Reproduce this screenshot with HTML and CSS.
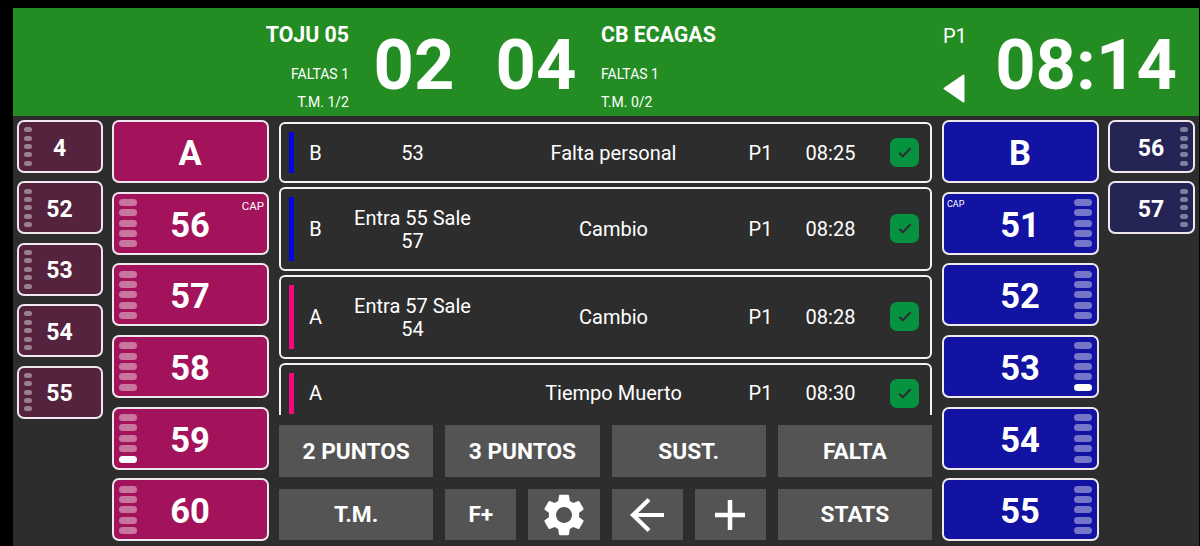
FILE: index.html
```html
<!DOCTYPE html>
<html lang="es">
<head>
  <meta charset="UTF-8">
  <title>Acta Baloncesto</title>
  <link rel="stylesheet" href="styles.css">
</head>
<body>

  <div class="app">
    <div class="header">
      <div class="team team-a">
        <div class="team-name">TOJU 05</div>
        <div class="fouls">FALTAS 1</div>
        <div class="timeouts">T.M. 1/2</div>
      </div>
      <div class="score">02</div>
      <div class="score">04</div>
      <div class="team team-b">
        <div class="team-name">CB ECAGAS</div>
        <div class="fouls">FALTAS 1</div>
        <div class="timeouts">T.M. 0/2</div>
      </div>
      <div class="period">
        <span>P1</span>
        <svg class="arrow" viewBox="0 0 22 29"><path d="M20.5 1.5v26L1.5 14.5z" fill="#fff" stroke="#fff" stroke-width="2" stroke-linejoin="round"/></svg>
      </div>
      <div class="clock">08:14</div>
    </div>

    <div class="main">
      <div class="bench bench-a" id="benchA"></div>
      <div class="court court-a" id="courtA"></div>

      <div class="center">
        <div class="log" id="log"></div>
        <div class="actions">
          <button class="wide">2 PUNTOS</button>
          <button class="wide">3 PUNTOS</button>
          <button class="wide">SUST.</button>
          <button class="wide">FALTA</button>
          <button class="wide">T.M.</button>
          <button>F+</button>
          <button>
            <svg class="gear" viewBox="2 2 20 20"><path fill="#fff" d="M19.14 12.94c.04-.3.06-.61.06-.94 0-.32-.02-.64-.07-.94l2.03-1.58c.18-.14.23-.41.12-.61l-1.92-3.32c-.12-.22-.37-.29-.59-.22l-2.39.96c-.5-.38-1.03-.7-1.62-.94l-.36-2.54c-.04-.24-.24-.41-.48-.41h-3.84c-.24 0-.43.17-.47.41l-.36 2.54c-.59.24-1.13.57-1.62.94l-2.39-.96c-.22-.08-.47 0-.59.22L2.74 8.87c-.12.21-.08.47.12.61l2.03 1.58c-.05.3-.09.63-.09.94s.02.64.07.94l-2.03 1.58c-.18.14-.23.41-.12.61l1.92 3.32c.12.22.37.29.59.22l2.39-.96c.5.38 1.03.7 1.62.94l.36 2.54c.05.24.24.41.48.41h3.84c.24 0 .44-.17.47-.41l.36-2.54c.59-.24 1.13-.56 1.62-.94l2.39.96c.22.08.47 0 .59-.22l1.92-3.32c.12-.22.07-.47-.12-.61l-2.01-1.58zM12 15.8c-2.1 0-3.8-1.7-3.8-3.8s1.7-3.8 3.8-3.8 3.8 1.7 3.8 3.8-1.7 3.8-3.8 3.8z"/></svg>
          </button>
          <button>
            <svg class="back" viewBox="0 0 36 36"><path d="M35 18H4M20 2.500L4 18l16 15.500" fill="none" stroke="#fff" stroke-width="4.200"/></svg>
          </button>
          <button>
            <svg class="plus" viewBox="0 0 30 30"><path d="M15 0v30M0 15h30" stroke="#fff" stroke-width="4.500"/></svg>
          </button>
          <button class="wide">STATS</button>
        </div>
      </div>

      <div class="court court-b" id="courtB"></div>
      <div class="bench bench-b" id="benchB"></div>
    </div>
  </div>

  <script>
    const players = {
      benchA: [{n: 4}, {n: 52}, {n: 53}, {n: 54}, {n: 55}],
      courtA: [{n: 'A', team: true}, {n: 56, cap: true}, {n: 57}, {n: 58}, {n: 59, fouls: 1}, {n: 60}],
      courtB: [{n: 'B', team: true}, {n: 51, cap: true}, {n: 52}, {n: 53, fouls: 1}, {n: 54}, {n: 55}],
      benchB: [{n: 56}, {n: 57}]
    };

    const plays = [
      {team: 'B', who: '53', what: 'Falta personal', time: '08:25'},
      {team: 'B', who: 'Entra 55 Sale 57', what: 'Cambio', time: '08:28'},
      {team: 'A', who: 'Entra 57 Sale 54', what: 'Cambio', time: '08:28'},
      {team: 'A', who: '', what: 'Tiempo Muerto', time: '08:30'}
    ];

    // five foul marks, filled from the bottom
    function foulMarks(fouls) {
      let html = '';
      for (let i = 5; i >= 1; i--) {
        html += `<i class="${i <= fouls ? 'on' : ''}"></i>`;
      }
      return `<span class="marks">${html}</span>`;
    }

    for (const id in players) {
      document.getElementById(id).innerHTML = players[id].map(p => `
        <button class="player">
          ${p.team ? '' : foulMarks(p.fouls || 0)}
          <span class="number">${p.n}</span>
          ${p.cap ? '<span class="cap">CAP</span>' : ''}
        </button>`).join('');
    }

    document.getElementById('log').innerHTML = plays.map(p => `
      <div class="play play-${p.team.toLowerCase()}">
        <span class="bar"></span>
        <span class="cell">${p.team}</span>
        <span class="who">${p.who}</span>
        <span class="cell">${p.what}</span>
        <span class="cell">P1</span>
        <span class="cell">${p.time}</span>
        <span class="check"><svg viewBox="0 0 14 11"><path d="M1.200 5.800L4.800 9.300L12.500 1.300" fill="none" stroke="#2d2d2d" stroke-width="2"/></svg></span>
      </div>`).join('');
  </script>
</body>
</html>
```

FILE: styles.css
```css
* {
  box-sizing: border-box;
}
body {
  margin: 0;
  padding: 8px 1px 0 13px;
  height: 546px;
  overflow: hidden;
  background: #000;
  color: #fff;
  font-family: Roboto, sans-serif;
}
button {
  font-family: inherit;
  color: #fff;
  padding: 0;
  margin: 0;
  border: none;
  cursor: pointer;
}
.app {
  height: 538px;
  background: #2d2d2d;
}

/* header */
.header {
  height: 108px;
  background: #238d23;
  display: grid;
  grid-template-columns: 337px 128px 116px 1fr 30px 226px;
}
.team {
  padding-top: 14px;
  font-size: 14px;
  line-height: 28px;
}
.team-a {
  text-align: right;
  padding-right: 1px;
}
.team-b {
  padding-left: 7px;
}
.team-name {
  font-size: 21.300px;
  font-weight: bold;
  line-height: 26px;
  margin-bottom: 12px;
}
.score, .clock {
  font-size: 70.500px;
  font-weight: bold;
  line-height: 115px;
  text-align: center;
}
.period {
  font-size: 20px;
  line-height: 24px;
  padding-top: 16px;
}
.period span {
  display: block;
}
.arrow {
  display: block;
  width: 22px;
  height: 29px;
  margin-top: 26px;
}

/* columns */
.main {
  display: flex;
  height: 430px;
  padding: 4px 4px 0 4px;
}
.bench, .court {
  flex: none;
  display: flex;
  flex-direction: column;
}
.bench {
  width: 86px;
  gap: 8.400px;
}
.bench-b {
  width: 87px;
}
.court {
  width: 157px;
  gap: 8.700px;
}
.court-a {
  margin: 0 10px 0 9px;
}
.court-b {
  margin: 0 9px 0 10px;
}

.player {
  flex: none;
  display: grid;
  grid-template-columns: 1fr auto 1fr;
  align-items: center;
  border: 2px solid #efe6ee;
  border-radius: 7px;
  font-weight: bold;
}
.player .number {
  grid-area: 1 / 2;
  padding: 3px 1px 0 0;
}
.court .player {
  height: 63px;
  font-size: 34.500px;
}
.bench .player {
  height: 53px;
  font-size: 23px;
}
.court-a .player {
  background: #a3135b;
}
.bench-a .player {
  background: #55233d;
}
.court-b .player {
  background: #1212a3;
}
.bench-b .player {
  background: #242455;
}

.marks {
  grid-area: 1 / 1;
  display: flex;
  flex-direction: column;
  gap: 3.400px;
  margin: 0 5px;
}
.marks i {
  width: 18px;
  height: 7px;
  border-radius: 4px;
  background: rgba(255, 255, 255, 0.42);
}
.marks i.on {
  background: #fff;
}
.bench .marks i {
  width: 8px;
  height: 5px;
  border-radius: 3px;
}
.court-b .marks, .bench-b .marks {
  grid-area: 1 / 3;
  justify-self: end;
}
.cap {
  grid-area: 1 / 3;
  align-self: start;
  justify-self: end;
  font-size: 11.500px;
  font-weight: normal;
  line-height: 14px;
  margin: 5px 3px;
}
.court-b .cap {
  grid-area: 1 / 1;
  justify-self: start;
  font-size: 9px;
  line-height: 12px;
  margin: 4px 3px;
}

/* play by play */
.center {
  flex: 1;
  min-width: 0;
}
.log {
  height: 295px;
  padding-top: 2px;
  overflow: hidden;
}
.play {
  display: grid;
  grid-template-columns: 5px 43px 151px 251px 43px 97px 1fr;
  align-items: center;
  min-height: 61px;
  margin-bottom: 3.400px;
  padding: 8px;
  border: 2px solid #f4f4f4;
  border-radius: 6px;
  font-size: 20px;
  line-height: 23.400px;
  text-align: center;
}
.bar {
  align-self: stretch;
}
.play-a .bar {
  background: #f50a7e;
}
.play-b .bar {
  background: #0505e0;
}
.cell {
  padding-top: 2px;
}
.who {
  padding: 10px 14px 7.800px;
}
.check {
  display: flex;
  align-items: center;
  justify-content: center;
  width: 29px;
  height: 29px;
  margin-left: 11px;
  border-radius: 7px;
  background: #05933f;
}
.check svg {
  width: 14px;
  height: 11px;
}

/* buttons */
.actions {
  display: grid;
  grid-template-columns: repeat(8, 1fr);
  gap: 12px;
  margin-top: 10px;
}
.actions button {
  display: flex;
  align-items: center;
  justify-content: center;
  height: 51.500px;
  padding-top: 1px;
  background: #545454;
  font-size: 22.700px;
  font-weight: bold;
}
.actions .wide {
  grid-column: span 2;
}
.gear {
  width: 42px;
  height: 42px;
}
.back {
  width: 36px;
  height: 36px;
}
.plus {
  width: 30px;
  height: 30px;
}
```
